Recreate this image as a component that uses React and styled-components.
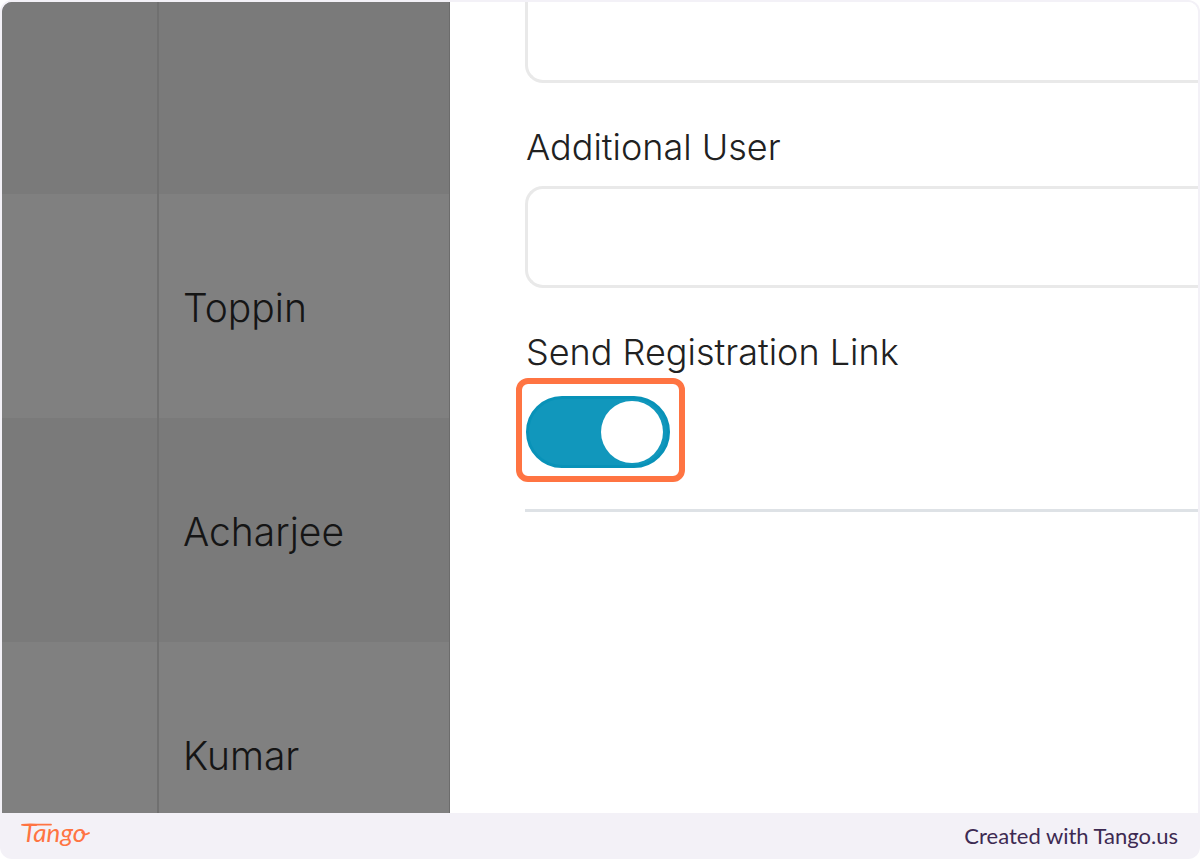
import React from "react";
import styled, { createGlobalStyle } from "styled-components";

const people = ["", "Toppin", "Acharjee", "Kumar"];

export default function App() {
  return (
    <>
      <GlobalStyle />
      <Frame>
        <Screen>
          <Backdrop>
            <Table>
              <tbody>
                {people.map((name, i) => (
                  <Row key={i} $striped={i % 2 === 0}>
                    <Cell $narrow />
                    <Cell>{name}</Cell>
                  </Row>
                ))}
              </tbody>
            </Table>
          </Backdrop>
          <Panel>
            <TextInput $cut type="text" aria-label="User" />
            <Label htmlFor="additional">Additional User</Label>
            <TextInput id="additional" type="text" />
            <Label htmlFor="send-link">Send Registration Link</Label>
            <ToggleWrapper>
              <Toggle id="send-link" type="checkbox" defaultChecked />
              <Highlight />
            </ToggleWrapper>
            <Divider />
          </Panel>
        </Screen>
        <Footer>
          <Logo width="76" height="40" viewBox="0 0 76 40">
            <text x="2" y="26">Tango</text>
            <path d="M2 8.800C9 8 20 9 31 8.600M62 16.500C64 19 67 18.600 69 17" />
          </Logo>
          <Credit>Created with Tango.us</Credit>
        </Footer>
      </Frame>
    </>
  );
}

const GlobalStyle = createGlobalStyle`
  * {
    box-sizing: border-box;
  }
  body {
    margin: 0;
    background: #ffffff;
    font-family: Inter, "Liberation Sans", sans-serif;
    font-weight: 300;
  }
`;

const Frame = styled.div`
  display: flex;
  flex-direction: column;
  height: 100vh;
  padding: 2px 2px 0;
  border-radius: 12px;
  background: #f3f1f7;
`;

const Screen = styled.main`
  display: flex;
  flex: 1;
  min-height: 0;
  overflow: hidden;
  border-radius: 10px 10px 0 0;
  background: #ffffff;
`;

const Backdrop = styled.section`
  flex: 0 0 448px;
  overflow: hidden;
  background: #808080;
  border-right: 1px solid #6c6c6c;
`;

const Table = styled.table`
  width: 100%;
  border-collapse: collapse;
  table-layout: fixed;
`;

const Row = styled.tr`
  height: 224px;
  background: ${(props) => (props.$striped ? "#7a7a7a" : "#808080")};
  &:first-child {
    height: 192px;
  }
`;

const Cell = styled.td`
  width: ${(props) => (props.$narrow ? "156px" : "auto")};
  padding: 4px 0 0 24px;
  border-right: ${(props) => (props.$narrow ? "2px solid #707070" : "none")};
  color: #151515;
  font-size: 39px;
  line-height: 48px;
`;

const Panel = styled.form`
  display: flex;
  flex: 1;
  flex-direction: column;
  min-width: 0;
  padding-left: 75px;
`;

const Label = styled.label`
  margin-top: 42px;
  padding-left: 1px;
  color: #212121;
  font-size: 36px;
  line-height: 44px;
  white-space: nowrap;
`;

const TextInput = styled.input`
  flex: none;
  width: 100%;
  height: ${(props) => (props.$cut ? "81px" : "102px")};
  margin-top: ${(props) => (props.$cut ? "0" : "17px")};
  padding: 0 24px;
  border: 3px solid #e9e9e9;
  border-width: ${(props) => (props.$cut ? "0 0 3px 3px" : "3px 0 3px 3px")};
  border-radius: ${(props) => (props.$cut ? "0 0 0 18px" : "18px 0 0 18px")};
  outline: none;
  background: #ffffff;
  font: inherit;
  font-size: 36px;
`;

const ToggleWrapper = styled.div`
  position: relative;
  width: 144px;
  height: 72px;
  margin: 22px 0 0 1px;
`;

const Toggle = styled.input`
  display: flex;
  align-items: center;
  width: 100%;
  height: 100%;
  margin: 0;
  padding: 0 4px;
  appearance: none;
  border: 3px solid #0892b8;
  border-radius: 36px;
  background: #1197bc;
  &::before {
    content: "";
    width: 62px;
    height: 62px;
    border-radius: 50%;
    background: #ffffff;
  }
  &:checked {
    justify-content: flex-end;
  }
`;

const Highlight = styled.span`
  position: absolute;
  inset: -18px -15px -14px -10px;
  border: 6px solid #ff7442;
  border-radius: 12px;
  pointer-events: none;
`;

const Divider = styled.hr`
  width: 100%;
  height: 3px;
  margin: 41px 0 0;
  border: none;
  background: #dee2e6;
`;

const Footer = styled.footer`
  display: flex;
  flex: none;
  align-items: center;
  justify-content: space-between;
  height: 46px;
  padding: 0 20px 0 18px;
`;

const Logo = styled.svg`
  fill: #ff7442;
  font-family: Lato, sans-serif;
  font-size: 26px;
  font-style: italic;
  font-weight: 400;
  path {
    fill: none;
    stroke: #ff7442;
    stroke-width: 1.8;
    stroke-linecap: round;
  }
`;

const Credit = styled.span`
  color: #3d2a52;
  font-family: Lato, sans-serif;
  font-size: 22px;
  font-weight: 400;
  line-height: 28px;
`;
